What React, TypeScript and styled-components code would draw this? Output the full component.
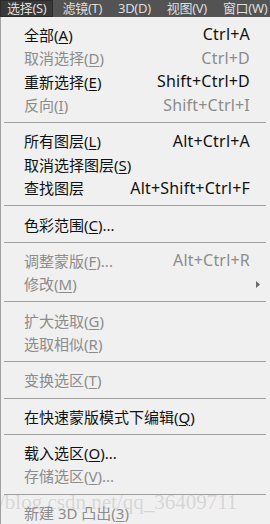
import React from "react";
import styled, { createGlobalStyle } from "styled-components";

type MenuEntry =
  | { kind: "item"; label: string; key?: string; tail?: string; shortcut?: string; disabled?: boolean; submenu?: boolean }
  | { kind: "sep" };

const tabs = [
  { label: "选择", key: "S", active: true },
  { label: "滤镜", key: "T" },
  { label: "3D", key: "D" },
  { label: "视图", key: "V" },
  { label: "窗口", key: "W" },
];

const entries: MenuEntry[] = [
  { kind: "item", label: "全部", key: "A", shortcut: "Ctrl+A" },
  { kind: "item", label: "取消选择", key: "D", shortcut: "Ctrl+D", disabled: true },
  { kind: "item", label: "重新选择", key: "E", shortcut: "Shift+Ctrl+D" },
  { kind: "item", label: "反向", key: "I", shortcut: "Shift+Ctrl+I", disabled: true },
  { kind: "sep" },
  { kind: "item", label: "所有图层", key: "L", shortcut: "Alt+Ctrl+A" },
  { kind: "item", label: "取消选择图层", key: "S" },
  { kind: "item", label: "查找图层", shortcut: "Alt+Shift+Ctrl+F" },
  { kind: "sep" },
  { kind: "item", label: "色彩范围", key: "C", tail: "..." },
  { kind: "sep" },
  { kind: "item", label: "调整蒙版", key: "F", tail: "...", shortcut: "Alt+Ctrl+R", disabled: true },
  { kind: "item", label: "修改", key: "M", disabled: true, submenu: true },
  { kind: "sep" },
  { kind: "item", label: "扩大选取", key: "G", disabled: true },
  { kind: "item", label: "选取相似", key: "R", disabled: true },
  { kind: "sep" },
  { kind: "item", label: "变换选区", key: "T", disabled: true },
  { kind: "sep" },
  { kind: "item", label: "在快速蒙版模式下编辑", key: "Q" },
  { kind: "sep" },
  { kind: "item", label: "载入选区", key: "O", tail: "..." },
  { kind: "item", label: "存储选区", key: "V", tail: "...", disabled: true },
  { kind: "sep" },
  { kind: "item", label: "新建 3D 凸出", key: "3", disabled: true },
];

const App = () => {
  return (
    <>
      <GlobalStyle />
      <Page>
        <MenuBar>
          {tabs.map((tab) => (
            <MenuTab key={tab.label} $active={!!tab.active}>
              {tab.label}({tab.key})
            </MenuTab>
          ))}
        </MenuBar>
        <Dropdown>
          {entries.map((entry, i) =>
            entry.kind === "sep" ? (
              <Separator key={i} />
            ) : (
              <Item key={i} $disabled={!!entry.disabled}>
                <Label>
                  {entry.label}
                  {entry.key && (
                    <>
                      (<u>{entry.key}</u>)
                    </>
                  )}
                  {entry.tail}
                </Label>
                {entry.shortcut && <Shortcut>{entry.shortcut}</Shortcut>}
                {entry.submenu && (
                  <Arrow viewBox="0 0 4 7">
                    <path d="M0 0 L4 3.5 L0 7 Z" />
                  </Arrow>
                )}
              </Item>
            )
          )}
          <Watermark>/blog.csdn.net/qq_36409711</Watermark>
        </Dropdown>
      </Page>
    </>
  );
};

export default App;

const GlobalStyle = createGlobalStyle`
  html, body {
    margin: 0;
    padding: 0;
    background: #f0f0f0;
  }
  body {
    font-family: "Noto Sans", "Noto Sans CJK SC", sans-serif;
  }
`;

const Page = styled.div`
  width: 270px;
  height: 524px;
  overflow: hidden;
  display: flex;
  flex-direction: column;
`;

const MenuBar = styled.div`
  height: 20px;
  background: #535353;
  display: flex;
  align-items: flex-start;
  gap: 2px;
  overflow: hidden;
`;

const MenuTab = styled.div<{ $active: boolean }>`
  height: 17px;
  box-sizing: border-box;
  padding: 0 6px;
  font-size: 13px;
  line-height: 15px;
  letter-spacing: -0.3px;
  color: #dedede;
  white-space: nowrap;
  background: ${(p) => (p.$active ? "#393939" : "transparent")};
  border: 1px solid ${(p) => (p.$active ? "#2b2b2b" : "transparent")};
`;

const Dropdown = styled.div`
  position: relative;
  flex: 1;
  background: #f0f0f0;
  border-left: 1px solid #a0a0a0;
  padding-top: 5px;
`;

const Item = styled.div<{ $disabled: boolean }>`
  height: 23.5px;
  display: flex;
  align-items: center;
  padding: 0 20px 0 23px;
  font-size: 15px;
  color: ${(p) => (p.$disabled ? "#8c8c8c" : "#111111")};
  position: relative;

  u {
    text-underline-offset: 2px;
    text-decoration-thickness: 1px;
  }
`;

const Label = styled.span`
  flex: 1;
  white-space: nowrap;
`;

const Shortcut = styled.span`
  white-space: nowrap;
  font-size: 16px;
  letter-spacing: 0.2px;
`;

const Arrow = styled.svg`
  position: absolute;
  right: 10px;
  top: 9px;
  width: 4px;
  height: 7px;
  fill: #6a6a6a;
`;

const Separator = styled.div`
  height: 1px;
  margin: 5.9px 4px 5.9px 3px;
  background: #a0a0a0;
`;

const Watermark = styled.div`
  position: absolute;
  left: -2px;
  top: 473px;
  font-family: "Liberation Serif", serif;
  font-size: 21px;
  color: rgba(150, 150, 150, 0.3);
  white-space: nowrap;
  pointer-events: none;
`;
